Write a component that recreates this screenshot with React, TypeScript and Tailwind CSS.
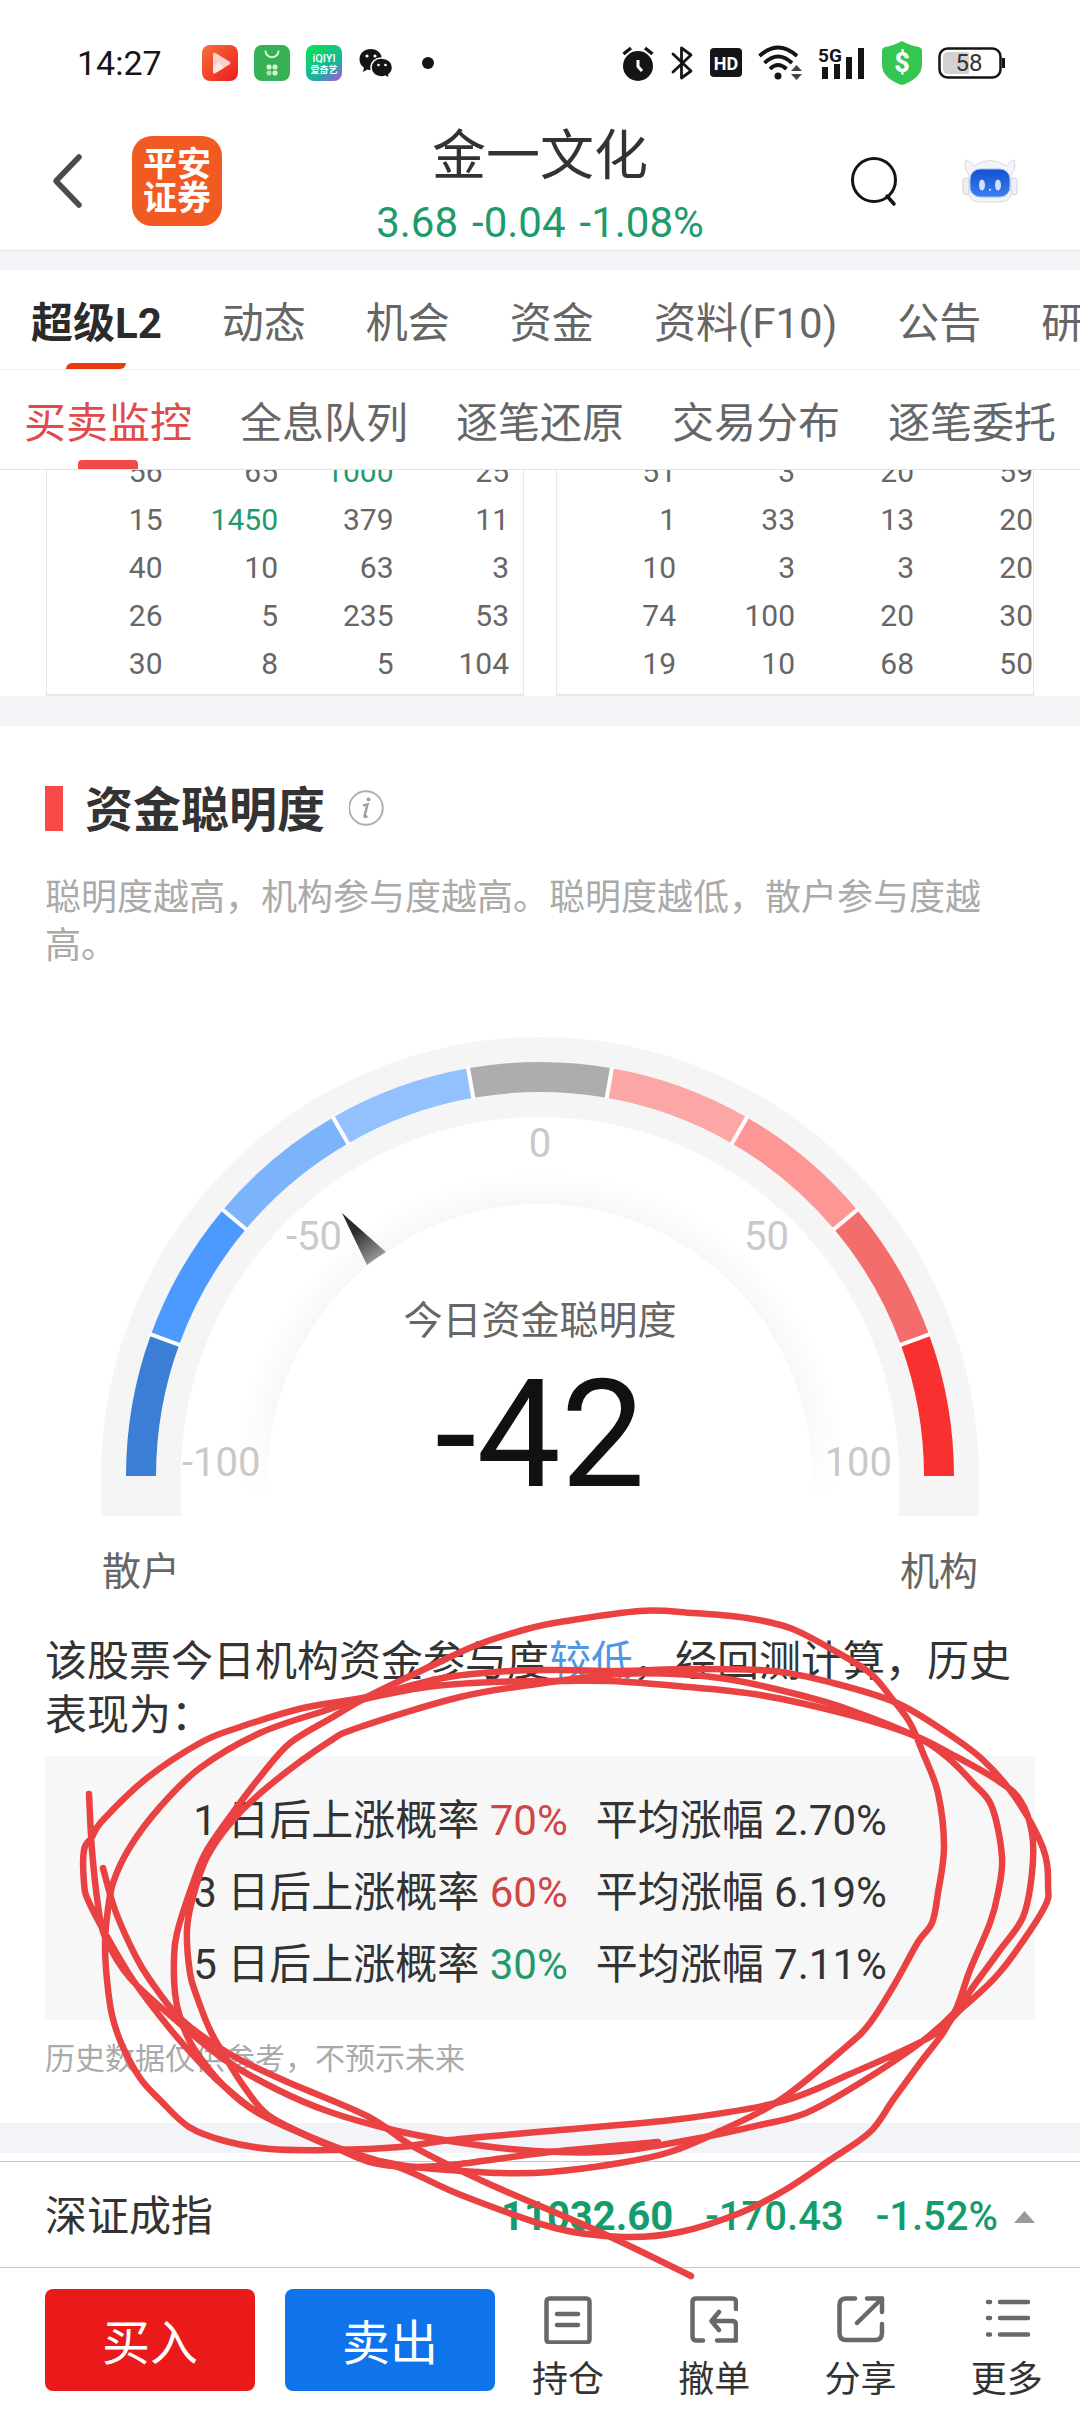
import type { ReactNode } from "react";

type Point = [number, number];

interface Forecast {
  days: number;
  chance: string;
  gain: string;
  up: boolean;
}

const mainTabs = ["超级L2", "动态", "机会", "资金", "资料(F10)", "公告", "研报"];
const subTabs = ["买卖监控", "全息队列", "逐笔还原", "交易分布", "逐笔委托"];

const sellRows = [
  ["56", "65", "1000", "25"],
  ["15", "1450", "379", "11"],
  ["40", "10", "63", "3"],
  ["26", "5", "235", "53"],
  ["30", "8", "5", "104"],
];

const buyRows = [
  ["51", "3", "20", "59"],
  ["1", "33", "13", "20"],
  ["10", "3", "3", "20"],
  ["74", "100", "20", "30"],
  ["19", "10", "68", "50"],
];

const forecasts: Forecast[] = [
  { days: 1, chance: "70%", gain: "2.70%", up: true },
  { days: 3, chance: "60%", gain: "6.19%", up: true },
  { days: 5, chance: "30%", gain: "7.11%", up: false },
];

const gaugeColors = [
  "#3a7fd5",
  "#4d9aff",
  "#7cb4fc",
  "#93c1ff",
  "#adadad",
  "#fda6a6",
  "#ff9696",
  "#f36d6d",
  "#f93030",
];

const StatusBar = () => (
  <div className="flex h-[117px] items-center justify-between pt-2 pr-[75px] pl-[77px]">
    <div className="flex items-center">
      <span className="w-[125px] text-[34px] leading-10 text-[#151515]">14:27</span>
      <div className="flex items-center gap-4">
        <svg className="size-9" viewBox="0 0 36 36">
          <defs>
            <linearGradient id="video" x1="0" y1="0" x2="1" y2="1">
              <stop offset="0" stopColor="#f0723a" />
              <stop offset="1" stopColor="#f01a1a" />
            </linearGradient>
          </defs>
          <rect width="36" height="36" rx="8" fill="url(#video)" />
          <path d="M11 9.5Q11 7 13.500 8L27.500 16.500Q29.500 18 27.500 19.500L13.500 28Q11 29.500 11 26.500Z" fill="#ffd0c8" />
          <path d="M11 21L17 17L22 23L13.500 28Q11 29.500 11 26.500Z" fill="#fff" opacity=".45" />
        </svg>
        <svg className="size-9" viewBox="0 0 36 36">
          <rect width="36" height="36" rx="8" fill="#36b255" />
          <path d="M11.500 6.500C12.500 14 23.500 14 24.500 6.500" fill="none" stroke="#d8f5dc" strokeWidth="2" strokeLinecap="round" />
          <g fill="#d8f5dc">
            <rect x="12.500" y="19.500" width="5" height="5" rx="2" />
            <rect x="18.500" y="19.500" width="5" height="5" rx="2" />
            <rect x="12.500" y="25.500" width="5" height="5" rx="2" opacity=".7" />
            <rect x="18.500" y="25.500" width="5" height="5" rx="2" />
          </g>
        </svg>
        <svg className="size-9" viewBox="0 0 36 36">
          <defs>
            <linearGradient id="iqiyi" x1=".3" y1="0" x2="1" y2="1">
              <stop offset="0" stopColor="#08dc5c" />
              <stop offset=".6" stopColor="#1cb0a0" />
              <stop offset="1" stopColor="#b44cf0" />
            </linearGradient>
          </defs>
          <rect width="36" height="36" rx="8" fill="url(#iqiyi)" />
          <text x="18" y="17" textAnchor="middle" fontSize="11" fontWeight="500" fill="#fff">iQIYI</text>
          <text x="18" y="28" textAnchor="middle" fontSize="9" fontWeight="700" fill="#fff">爱奇艺</text>
        </svg>
        <svg className="h-9 w-9" viewBox="0 0 36 36">
          <path d="M13 4C6 4 1.500 8.500 1.500 14.500C1.500 18 3.200 20.800 6 22.700L4.800 27L9.500 24.500Q11 25 13 25C19.500 25 24 20.500 24 14.500S19 4 13 4Z" fill="#151515" />
          <path d="M23.500 13C17.500 13 13 17 13 22.500S17.500 32 23.500 32Q25.500 32 27.500 31.300L31.500 33.500L30.800 29.800C33 28 34.500 25.500 34.500 22.500C34.500 17 30 13 23.500 13Z" fill="#151515" stroke="#fff" strokeWidth="1.500" />
          <g fill="#fff">
            <circle cx="9" cy="11" r="1.600" />
            <circle cx="17" cy="11" r="1.600" />
            <circle cx="20.500" cy="20" r="1.300" />
            <circle cx="27.500" cy="20" r="1.300" />
          </g>
        </svg>
      </div>
      <span className="ml-7 size-3 rounded-full bg-[#151515]" />
    </div>

    <div className="flex items-center gap-4">
      <svg className="h-9 w-8" viewBox="0 0 32 36">
        <circle cx="16" cy="21" r="15" fill="#151515" />
        <path d="M1.500 9L9 3M30.500 9L23 3" stroke="#151515" strokeWidth="3.500" />
        <path d="M16 15V21.500L20 26" fill="none" stroke="#fff" strokeWidth="3" />
      </svg>
      <svg className="h-9 w-6" viewBox="0 0 24 36">
        <path d="M3 9L21 26L11.500 33V3L21 10L3 27" fill="none" stroke="#151515" strokeWidth="2.800" strokeLinejoin="round" strokeLinecap="round" />
      </svg>
      <svg className="h-[30px] w-8" viewBox="0 0 32 30">
        <rect width="32" height="29" rx="4" fill="#151515" />
        <text x="16" y="22" textAnchor="middle" fontSize="18" fontWeight="700" fill="#fff">HD</text>
      </svg>
      <svg className="h-9 w-11" viewBox="0 0 44 36">
        <g fill="none" stroke="#151515" strokeWidth="3.800">
          <path d="M1.500 11Q20 -6 39 11" />
          <path d="M6.500 18Q20 5 34 18" />
          <path d="M12 24Q20 16 28.500 24" />
        </g>
        <circle cx="20" cy="31" r="3.500" fill="#151515" />
        <path d="M33 26L38.500 20L44 26ZM33 29H44L38.500 35Z" fill="#444" />
      </svg>
      <svg className="h-9 w-12" viewBox="0 0 48 36">
        <path d="M4 22h6v12h-6zM16 19h6v15h-6zM28 12h6v22h-6zM40 3h6v31h-6z" fill="#151515" />
        <text x="0" y="17" fontSize="19" fontWeight="700" fill="#151515">5G</text>
      </svg>
      <svg className="h-11 w-10" viewBox="0 0 40 44">
        <path d="M20 0Q29 5 37 6Q40 7 40 10V24C40 34 30 41 20 44C10 41 0 34 0 24V10Q0 7 3 6Q11 5 20 0Z" fill="#34c651" />
        <text x="20" y="31" textAnchor="middle" fontSize="27" fontWeight="800" fill="#fff">$</text>
      </svg>
      <svg className="h-8 w-[67px]" viewBox="0 0 67 32">
        <rect x="1.500" y="1.500" width="61" height="29" rx="8" fill="#fff" stroke="#151515" strokeWidth="2.500" />
        <path d="M10 5H31V27H10Q5 27 5 22V10Q5 5 10 5Z" fill="#d2d2d2" />
        <path d="M65.500 11V21" stroke="#151515" strokeWidth="3" />
        <text x="31" y="24" textAnchor="middle" fontSize="24" fill="#333">58</text>
      </svg>
    </div>
  </div>
);

const Header = () => (
  <header className="grid h-[134px] grid-cols-[1fr_auto_1fr] border-b border-[#e8e9ec]">
    <div className="flex items-center gap-12 pb-2 pl-[52px]">
      <button aria-label="返回">
        <svg className="h-14 w-8" viewBox="0 0 32 56">
          <path d="M27 4L4 28L27 52" fill="none" stroke="#4b4b4b" strokeWidth="5.500" strokeLinecap="round" strokeLinejoin="round" />
        </svg>
      </button>
      <div className="grid size-[90px] place-content-center rounded-[20px] bg-[#f15a22] text-center text-[34px] leading-[34px] font-bold text-white">
        <span>平安</span>
        <span>证券</span>
      </div>
    </div>
    <div className="pt-1">
      <h1 className="text-center text-[54px] leading-[72px] text-[#333]">金一文化</h1>
      <p className="flex justify-center gap-[14px] text-[42px] leading-[60px] text-[#1f9a6c]">
        <span>3.68</span>
        <span>-0.04</span>
        <span>-1.08%</span>
      </p>
    </div>
    <div className="flex items-center justify-end gap-16 pr-[62px] pb-2">
      <button aria-label="搜索">
        <svg className="h-[52px] w-[50px]" viewBox="0 0 50 52">
          <circle cx="26" cy="25" r="21.500" fill="none" stroke="#151515" strokeWidth="3" />
          <path d="M39 41L46 49" stroke="#151515" strokeWidth="3.500" strokeLinecap="round" />
        </svg>
      </button>
      <button aria-label="智能助手">
        <svg className="h-[46px] w-[56px]" viewBox="0 0 56 46">
          <defs>
            <linearGradient id="visor" x1="0" y1="0" x2="0" y2="1">
              <stop offset="0" stopColor="#1450d0" />
              <stop offset="1" stopColor="#3a80f0" />
            </linearGradient>
          </defs>
          <path d="M4 2Q9 4 12 8Q28 -3 44 8Q47 4 52 2Q55 9 49 17V28Q52 44 38 44H18Q4 44 7 28V17Q1 9 4 2Z" fill="#f3f4f8" stroke="#d9dae2" />
          <rect x="1" y="20" width="6" height="17" rx="3" fill="#f0f0f4" stroke="#d2d2da" />
          <rect x="49" y="20" width="6" height="17" rx="3" fill="#f0f0f4" stroke="#d2d2da" />
          <rect x="8" y="11" width="40" height="28" rx="10" fill="url(#visor)" stroke="#9cc4f8" />
          <ellipse cx="20" cy="27" rx="3" ry="5.500" fill="#cfe3ff" />
          <ellipse cx="36" cy="27" rx="3" ry="5.500" fill="#cfe3ff" />
          <path d="M26.500 31h3l-1.500 2.500z" fill="#cfe3ff" />
        </svg>
      </button>
    </div>
  </header>
);

const MainTabs = () => (
  <nav className="flex h-[100px] gap-[60px] overflow-hidden border-b border-[#eee] pl-[31px] text-[42px] whitespace-nowrap">
    {mainTabs.map((tab, i) => (
      <button
        key={tab}
        className={`flex shrink-0 flex-col items-center justify-between pt-[22px] ${
          i === 0 ? "font-bold text-[#2b2b2b]" : "text-[#666]"
        }`}
      >
        <span className="leading-[64px]">{tab}</span>
        {i === 0 && <span className="h-[6px] w-[60px] rounded-tl-md rounded-br-md bg-[#e8380d]" />}
      </button>
    ))}
  </nav>
);

const SubTabs = () => (
  <nav className="relative z-10 flex h-[100px] justify-between overflow-hidden border-b border-[#e2e2e2] bg-white px-6 text-[42px] whitespace-nowrap">
    {subTabs.map((tab, i) => (
      <button
        key={tab}
        className={`flex flex-col items-center justify-between pt-[22px] ${i === 0 ? "text-[#e04a4a]" : "text-[#666]"}`}
      >
        <span className="leading-[64px]">{tab}</span>
        {i === 0 && <span className="h-[9px] w-[60px] rounded-t-sm bg-[#f04a4a]" />}
      </button>
    ))}
  </nav>
);

const OrderTable = ({ rows, className = "" }: { rows: string[][]; className?: string }) => (
  <div className={`border border-b-2 border-[#e8e8e8] pb-[6px] ${className}`}>
    <table className="w-full table-fixed text-right text-[30px] leading-[48px] text-[#666]">
      <tbody>
        {rows.map((row, r) => (
          <tr key={r}>
            {row.map((value, c) => (
              <td key={c} className={`p-0 ${Number(value) >= 1000 ? "text-[#1f9a6c]" : ""}`}>
                {value}
              </td>
            ))}
          </tr>
        ))}
      </tbody>
    </table>
  </div>
);

// gauge geometry, all in view box units
const CX = 540;
const CY = 1476;

const polar = (radius: number, degrees: number): Point => {
  const a = (degrees * Math.PI) / 180;
  return [CX - radius * Math.cos(a), CY - radius * Math.sin(a)];
};

const arc = (radius: number, from: number, to: number) => {
  const [x1, y1] = polar(radius, from);
  const [x2, y2] = polar(radius, to);
  return `M${x1} ${y1}A${radius} ${radius} 0 0 1 ${x2} ${y2}`;
};

const Gauge = () => (
  <svg className="block w-full" viewBox="45 970 990 665">
    <defs>
      <radialGradient id="glow" gradientUnits="userSpaceOnUse" cx={CX} cy={CY} r="304">
        <stop offset=".895" stopColor="#f7f7f7" />
        <stop offset="1" stopColor="#fff" />
      </radialGradient>
      <linearGradient id="fade" x1="0" y1="0" x2="0" y2="1">
        <stop offset=".75" stopColor="#fff" stopOpacity="0" />
        <stop offset="1" stopColor="#fff" />
      </linearGradient>
      <linearGradient id="needle" gradientUnits="userSpaceOnUse" x1="342" y1="1213" x2="377" y2="1259">
        <stop offset=".4" stopColor="#2c2c2c" />
        <stop offset="1" stopColor="#9a9a9a" />
      </linearGradient>
    </defs>
    <path d="M101 1516V1476A439 439 0 0 1 979 1476V1516H899V1476A359 359 0 0 0 181 1476V1516Z" fill="#f5f5f5" />
    {gaugeColors.map((color, i) => (
      <path key={color} d={arc(399, i * 20, i * 20 + 20)} fill="none" stroke={color} strokeWidth="30" />
    ))}
    {gaugeColors.slice(1).map((color, i) => {
      const [x1, y1] = polar(383, i * 20 + 20);
      const [x2, y2] = polar(415, i * 20 + 20);
      return <line key={color} x1={x1} y1={y1} x2={x2} y2={y2} stroke="#fff" strokeWidth="4" />;
    })}
    <path d="M236 1494V1476A304 304 0 0 1 844 1476V1494H812V1476A272 272 0 0 0 268 1476V1494Z" fill="url(#glow)" />
    <rect x="220" y="1160" width="640" height="336" fill="url(#fade)" />
    <path d="M342 1213L386 1252Q376 1258 367 1265Z" fill="url(#needle)" />
    <g fontSize="40" fill="#c9c9c9">
      <text x="540" y="1157" textAnchor="middle">0</text>
      <text x="286" y="1250">-50</text>
      <text x="744" y="1250">50</text>
      <text x="182" y="1476">-100</text>
      <text x="892" y="1476" textAnchor="end">100</text>
    </g>
    <g fontSize="39" fill="#666">
      <text x="540" y="1334" textAnchor="middle">今日资金聪明度</text>
      <text x="102" y="1585">散户</text>
      <text x="978" y="1585" textAnchor="end">机构</text>
    </g>
    <text x="540" y="1486" textAnchor="middle" fontSize="150" fill="#111">-42</text>
  </svg>
);

const SmartMoney = () => (
  <section className="px-[45px] pt-[58px] pb-[45px]">
    <div className="flex h-12 items-center">
      <span className="h-[45px] w-[18px] bg-[#f94848]" />
      <h2 className="ml-[22px] pt-[6px] text-5xl leading-[48px] font-bold text-[#333]">资金聪明度</h2>
      <button aria-label="说明" className="ml-6">
        <svg className="size-9" viewBox="0 0 36 36">
          <circle cx="17" cy="18" r="16.800" fill="none" stroke="#b0b0b0" strokeWidth="2" />
          <path d="M14 15.500L18.500 14.500L15.500 26Q15.500 28 18.500 26" fill="none" stroke="#a0a0a0" strokeWidth="2.500" />
          <circle cx="19.500" cy="9.500" r="2" fill="#a0a0a0" />
        </svg>
      </button>
    </div>
    <p className="mt-[42px] text-4xl leading-[48px] text-[#aaa]">
      聪明度越高，机构参与度越高。聪明度越低，散户参与度越高。
    </p>
    <Gauge />
    <p className="text-[42px] leading-[54px] text-[#333]">
      该股票今日机构资金参与度<span className="text-[#4f96e5]">较低</span>，经回测计算，历史表现为：
    </p>
    <ul className="mt-[13px] bg-[#f7f7f7] pt-[29px] pb-[19px] text-[42px] leading-[72px] text-[#333]">
      {forecasts.map((item) => (
        <li key={item.days} className="flex justify-center whitespace-pre">
          <span>{item.days} 日后上涨概率 </span>
          <span className={item.up ? "text-[#d04545]" : "text-[#1f9a6c]"}>{item.chance}</span>
          <span className="ml-7">平均涨幅 {item.gain}</span>
        </li>
      ))}
    </ul>
    <p className="mt-5 text-3xl leading-[38px] text-[#aaa]">历史数据仅供参考，不预示未来</p>
  </section>
);

const IndexBar = () => (
  <div className="mt-2 flex h-[107px] items-center border-y border-[#c8c8c8] px-[45px] pt-1 text-[40px] text-[#149c6c]">
    <span className="mr-auto text-[42px] text-[#333]">深证成指</span>
    <span className="font-bold">11032.60</span>
    <span className="ml-8 font-medium">-170.43</span>
    <span className="ml-8 font-medium">-1.52%</span>
    <svg className="ml-4 h-3 w-[21px]" viewBox="0 0 21 12">
      <path d="M0 12L10.500 0L21 12Z" fill="#999" />
    </svg>
  </div>
);

const Action = ({ label, children }: { label: string; children: ReactNode }) => (
  <button className="flex flex-1 flex-col items-center gap-3 text-4xl leading-[48px] text-[#333]">
    <svg
      className="size-12"
      viewBox="0 0 48 48"
      fill="none"
      stroke="#686868"
      strokeWidth="4.500"
      strokeLinecap="round"
      strokeLinejoin="round"
    >
      {children}
    </svg>
    {label}
  </button>
);

const BottomBar = () => (
  <footer className="flex items-start pl-[45px]">
    <div className="flex gap-[30px] pt-[21px] text-5xl text-white">
      <button className="h-[102px] w-[210px] rounded-lg bg-[#ea1a1a] pt-2">买入</button>
      <button className="h-[102px] w-[210px] rounded-lg bg-[#0f74ec] pt-2">卖出</button>
    </div>
    <div className="flex flex-1 pt-7 pb-2">
      <Action label="持仓">
        <rect x="2.500" y="2.500" width="43" height="44" rx="3" />
        <path d="M13 18H34M13 29H34" />
      </Action>
      <Action label="撤单">
        <path d="M46 13V6Q46 2.500 42 2.500H6Q2.500 2.500 2.500 6V40Q2.500 44.500 6 44.500H13M27 44.500H46V29Q46 25 42 25H22M29 16L21.500 25L29 34" />
      </Action>
      <Action label="分享">
        <path d="M18 2.500H9Q2.500 2.500 2.500 9V37Q2.500 44 9 44H38Q45 44 45 37V28M30 2.500H45V16M45 2.500L20 27" />
      </Action>
      <Action label="更多">
        <path d="M5 6H7M5 22H7M5 38.500H7M17 6H45M17 22H45M17 38.500H45" />
      </Action>
    </div>
  </footer>
);

// points of the hand-drawn marker strokes
const strokes: Point[][] = [
  [
    [89, 1794], [92, 1850], [98, 1905], [105, 1937], [130, 1978], [178, 2022], [225, 2060], [278, 2090], [330, 2112],
    [393, 2130], [450, 2141], [510, 2149], [560, 2152], [620, 2151], [700, 2138], [760, 2125], [806, 2113], [860, 2083],
    [920, 2043], [955, 2012], [973, 1987], [1000, 1950], [1023, 1917], [1032, 1873], [1032, 1833], [1020, 1800],
    [997, 1780], [953, 1755], [913, 1735], [850, 1715], [760, 1695], [677, 1686], [610, 1681], [560, 1681], [493, 1682],
    [427, 1687], [360, 1700], [327, 1710], [260, 1733], [200, 1768], [160, 1807], [130, 1847], [113, 1883], [107, 1917],
    [105, 1945], [107, 1980], [112, 2015], [122, 2045], [140, 2078], [160, 2100], [189, 2127], [225, 2141], [270, 2149],
    [330, 2150], [400, 2147], [450, 2140], [560, 2130], [680, 2119], [780, 2102], [850, 2074], [930, 2037], [960, 2010],
    [1000, 1972], [1043, 1910], [1048, 1885], [1043, 1848], [1015, 1797], [983, 1760], [947, 1733], [897, 1703],
    [833, 1683], [773, 1671], [693, 1669], [620, 1671], [560, 1670], [510, 1671], [443, 1678], [367, 1697], [303, 1708],
    [237, 1728], [200, 1743], [147, 1778], [103, 1820], [92, 1837], [84, 1850], [84, 1883], [88, 1900], [105, 1933],
    [133, 1980], [171, 2030], [205, 2068], [225, 2087], [262, 2115], [330, 2145], [370, 2162], [410, 2167], [460, 2164],
    [550, 2152], [658, 2142],
  ],
  [
    [262, 2115], [340, 2150], [400, 2165], [450, 2170], [500, 2173], [550, 2172], [620, 2163], [670, 2152], [720, 2131],
    [780, 2100], [847, 2046], [870, 2023], [893, 1987], [918, 1942], [932, 1923], [938, 1893], [944, 1847], [938, 1793],
    [923, 1753], [910, 1723], [893, 1700], [870, 1673], [833, 1650], [790, 1628], [747, 1618], [693, 1613], [640, 1611],
    [560, 1622], [527, 1629], [477, 1645], [427, 1668], [367, 1697], [333, 1717], [290, 1743], [260, 1777], [237, 1807],
    [207, 1850], [193, 1883], [177, 1933], [174, 1960], [175, 1993], [180, 2017], [193, 2047], [225, 2087], [262, 2115],
    [330, 2145], [403, 2169], [461, 2195], [555, 2228], [623, 2237], [680, 2232], [740, 2213], [785, 2190], [830, 2160],
    [870, 2132], [893, 2100], [920, 2063], [943, 2033], [957, 2007], [970, 1970], [990, 1923], [998, 1893], [1002, 1857],
    [992, 1807], [973, 1783], [947, 1757], [917, 1737], [850, 1710], [800, 1695], [733, 1680], [677, 1674], [620, 1674],
    [537, 1684], [460, 1697], [360, 1727], [327, 1743], [270, 1785], [233, 1820], [207, 1857], [193, 1897], [187, 1930],
    [190, 1973], [197, 1997], [210, 2030], [227, 2060], [245, 2088], [268, 2115], [310, 2137],
  ],
  [
    [103, 1868], [115, 1910], [135, 1955], [150, 1980], [180, 2018], [228, 2053], [283, 2080], [367, 2116], [414, 2147],
    [487, 2183], [602, 2233], [691, 2276],
  ],
];

// Catmull-Rom spline through the points
const smooth = (pts: Point[]) => {
  let d = `M${pts[0][0]} ${pts[0][1]}`;
  for (let i = 0; i < pts.length - 1; i++) {
    const p0 = pts[i - 1] ?? pts[i];
    const p1 = pts[i];
    const p2 = pts[i + 1];
    const p3 = pts[i + 2] ?? p2;
    d += `C${p1[0] + (p2[0] - p0[0]) / 6} ${p1[1] + (p2[1] - p0[1]) / 6} ${p2[0] - (p3[0] - p1[0]) / 6} ${
      p2[1] - (p3[1] - p1[1]) / 6
    } ${p2[0]} ${p2[1]}`;
  }
  return d;
};

const Marker = () => (
  <svg className="pointer-events-none absolute inset-x-0 top-0 z-20 w-full" viewBox="0 0 1080 2412">
    <g fill="none" stroke="#ea4242" strokeWidth="6.500" strokeLinecap="round" strokeLinejoin="round">
      {strokes.map((pts, i) => (
        <path key={i} d={smooth(pts)} />
      ))}
    </g>
  </svg>
);

const App = () => {
  return (
    <div className="relative w-full overflow-hidden bg-white font-['Roboto','Noto_Sans_CJK_SC',sans-serif]">
      <StatusBar />
      <Header />
      <div className="h-[19px] bg-[#f3f4f8]" />
      <MainTabs />
      <SubTabs />
      <div className="-mt-[23px] grid grid-cols-2 gap-8 px-[46px]">
        <OrderTable rows={sellRows} className="pr-[14px]" />
        <OrderTable rows={buyRows} />
      </div>
      <div className="h-[30px] bg-[#f3f4f8]" />
      <SmartMoney />
      <div className="h-[30px] bg-[#f3f4f8]" />
      <IndexBar />
      <BottomBar />
      <Marker />
    </div>
  );
};

export default App;
